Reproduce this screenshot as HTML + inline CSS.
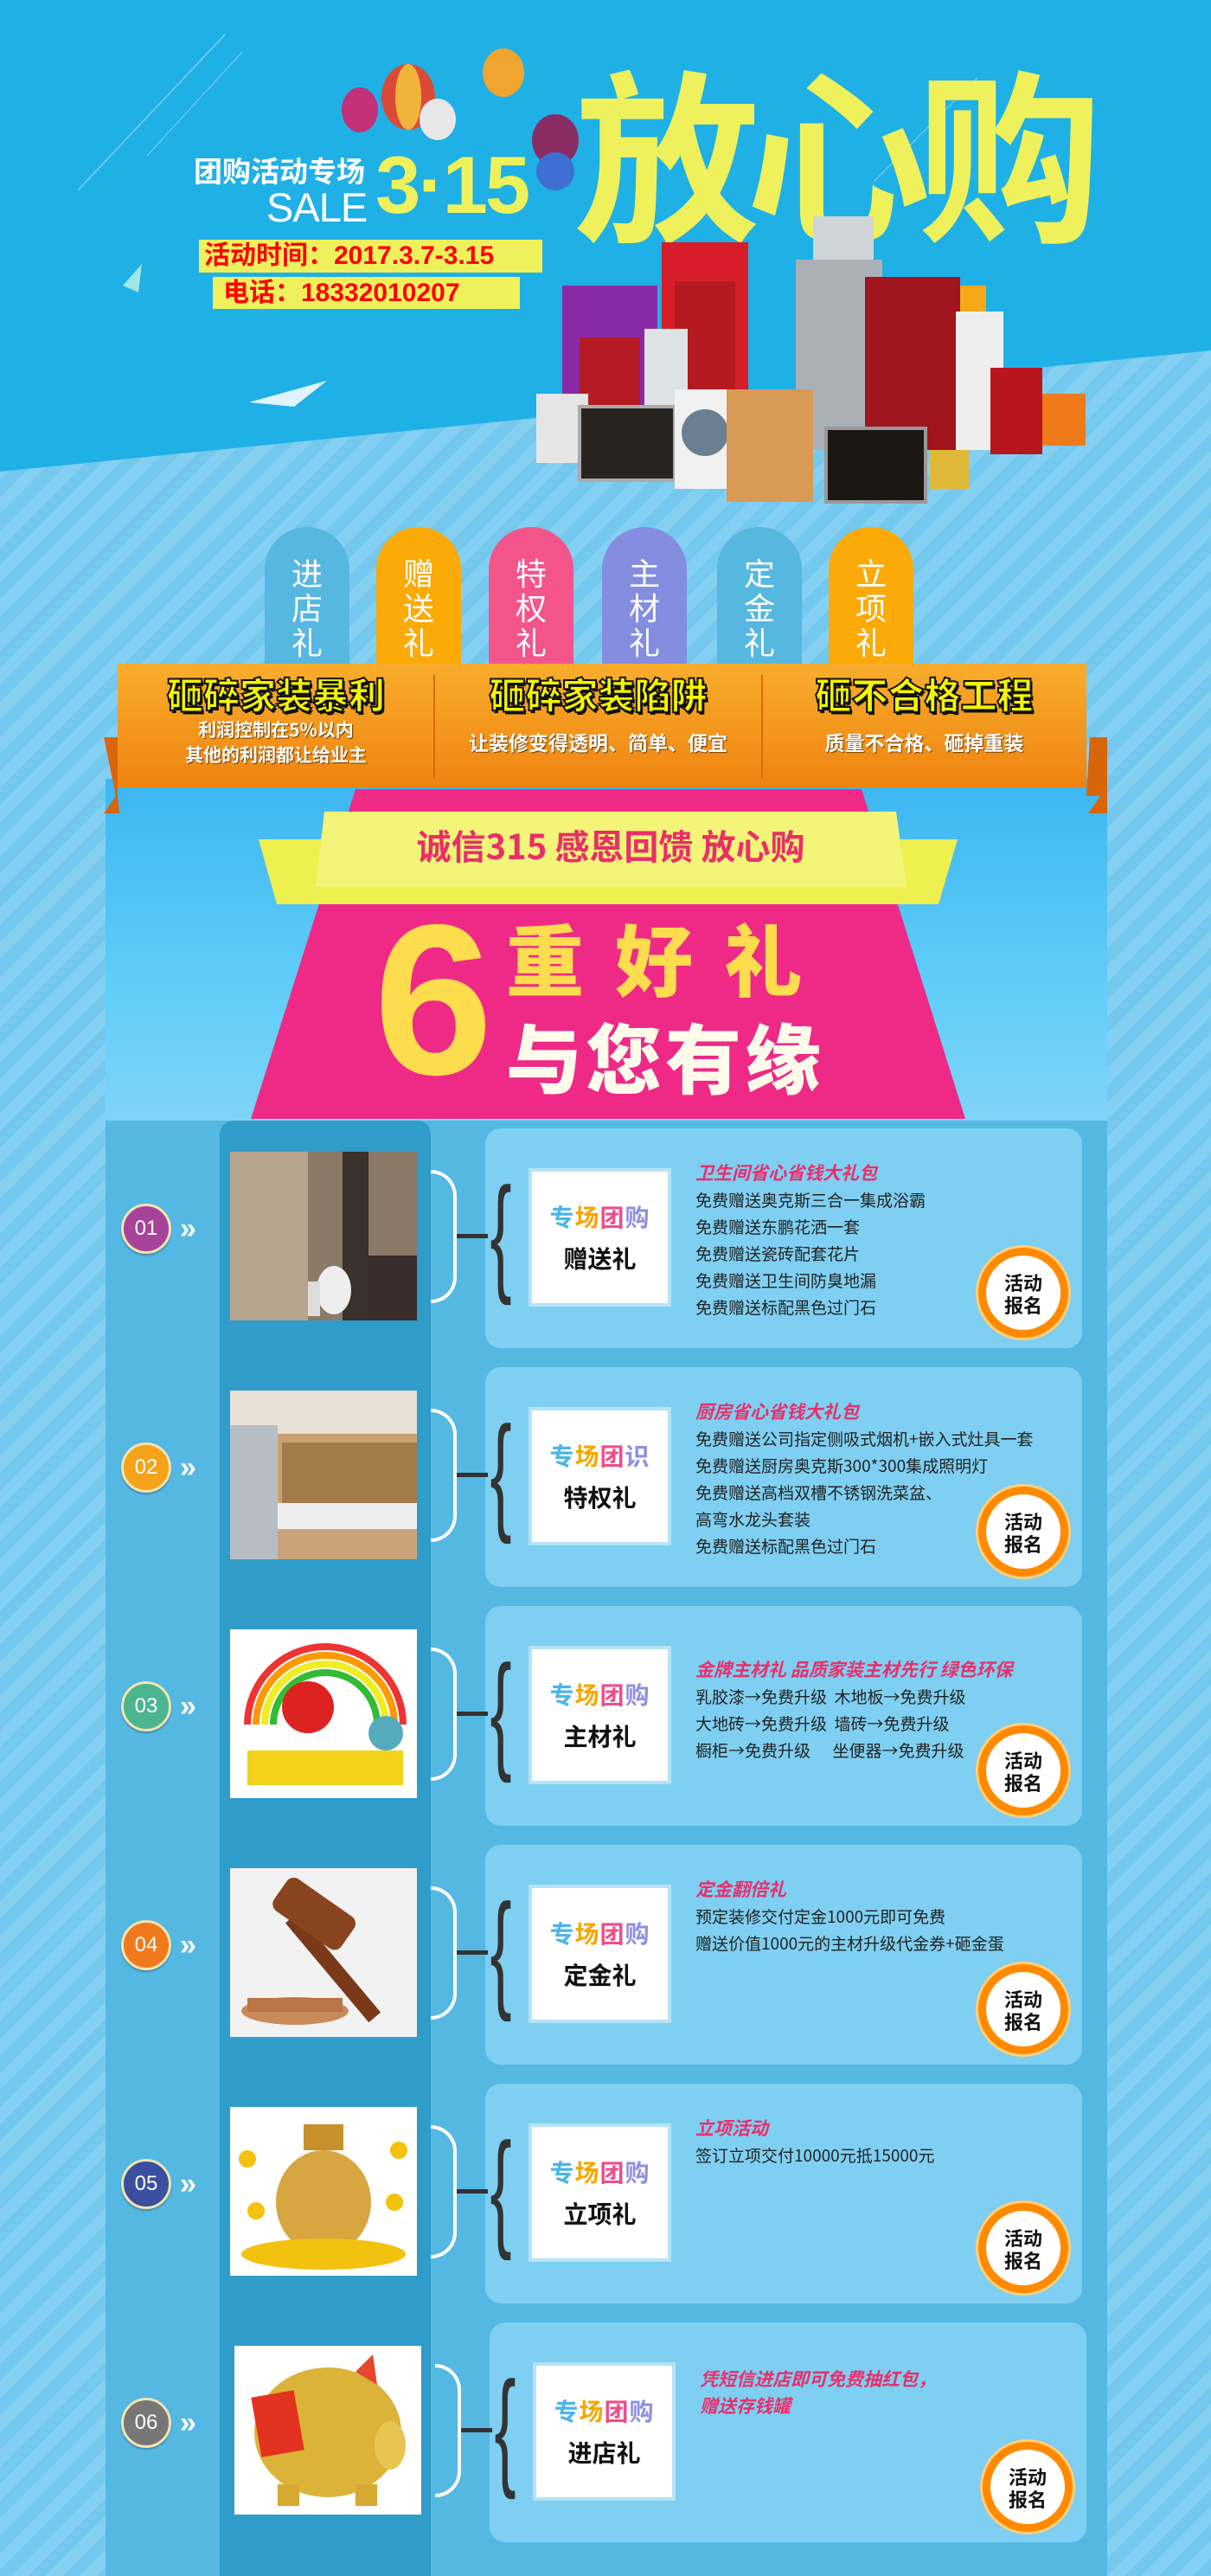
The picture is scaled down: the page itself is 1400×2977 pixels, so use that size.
<!DOCTYPE html>
<html><head><meta charset="utf-8">
<style>
*{margin:0;padding:0;box-sizing:border-box}
body{width:1400px;height:2977px;position:relative;overflow:hidden;font-family:"Liberation Sans","Noto Sans CJK SC",sans-serif;
background:repeating-linear-gradient(135deg,#74c8ee 0 14px,#84d0f2 14px 28px);}
.abs{position:absolute}
.hdr{left:0;top:0;width:1400px;height:545px;background:#1fb0e6;clip-path:polygon(0 0,1400px 0,1400px 405px,0 545px)}
.tab{top:609px;width:98px;height:170px;border-radius:49px 49px 0 0;color:#fff;font-size:36px;line-height:40px;text-align:center;padding-top:32px;font-family:"Noto Sans CJK SC",sans-serif}
.panel{left:122px;top:900px;width:1158px;height:2077px;background:#55b8e3}
.sky{left:122px;top:900px;width:1158px;height:395px;background:linear-gradient(180deg,#3db6f0,#5fcdf8 60%,#7fd4f7)}
.col{left:254px;top:1295px;width:244px;height:1682px;background:#309cca;border-radius:16px 16px 0 0}
.card{left:561px;width:690px;height:254px;background:#7ecff1;border-radius:18px}
.img{left:266px;width:216px;height:195px}
.num{left:140px;width:58px;height:58px;border-radius:50%;border:3px solid #f1e4b0;color:#fff;font-size:24px;line-height:52px;text-align:center;box-shadow:0 2px 2px rgba(0,0,0,.25)}
.chev{left:208px;color:#fff;font-size:34px;font-weight:bold;line-height:34px}
.box{left:611px;width:165px;height:160px;background:#fff;border:4px solid #b5e3f7;text-align:center;font-family:"Noto Sans CJK SC",sans-serif;font-weight:bold}
.box .t{font-size:28px;margin-top:32px;letter-spacing:1px}
.box .s{font-size:28px;color:#111;margin-top:8px}
.txt{left:804px;font-family:"Noto Sans CJK SC",sans-serif;font-size:19px;line-height:31px;color:#222}
.txt .h{color:#e8306c;font-style:italic;font-weight:bold;font-size:21px}
.btn{width:104px;height:104px;border-radius:50%;background:#fff;border:9px solid #ff8a00;box-shadow:inset 0 0 0 4px #fff,0 0 0 3px #ffd07a;font-family:"Noto Sans CJK SC",sans-serif;font-weight:bold;font-size:22px;line-height:26px;text-align:center;padding-top:18px;color:#111}
.brace{font-family:"Liberation Sans",sans-serif}
.bh{font-size:42px;font-weight:900;color:#f3f600;-webkit-text-stroke:2px #111;line-height:54px;text-shadow:2px 3px 0 #111}
</style></head><body>
<div class="abs hdr"></div>
<svg class="abs" style="left:0;top:0" width="1400" height="560">
<line x1="90" y1="220" x2="260" y2="40" stroke="#7fd0f3" stroke-width="1.5"/>
<line x1="170" y1="180" x2="280" y2="60" stroke="#7fd0f3" stroke-width="1"/>
<line x1="1010" y1="210" x2="1130" y2="90" stroke="#7fd0f3" stroke-width="1"/>
<polygon points="288,465 378,440 330,455" fill="#fff"/>
<polygon points="288,465 378,440 340,470" fill="#dff4fc"/>
<polygon points="142,330 164,305 160,338" fill="#9fe7e4"/>
<ellipse cx="416" cy="127" rx="21" ry="26" fill="#c2307a"/><ellipse cx="472" cy="112" rx="31" ry="38" fill="#d94b36"/><ellipse cx="472" cy="112" rx="15" ry="38" fill="#f2b33a"/>
<ellipse cx="506" cy="138" rx="21" ry="24" fill="#e8e8e8"/><ellipse cx="582" cy="84" rx="24" ry="28" fill="#f0a531"/><ellipse cx="642" cy="162" rx="27" ry="30" fill="#8a2c64"/><ellipse cx="642" cy="198" rx="22" ry="22" fill="#3f6fd2"/>
</svg>
<div class="abs" style="left:224px;top:176px;font-size:33px;font-weight:bold;color:#fff;font-family:'Noto Sans CJK SC',sans-serif;line-height:40px">团购活动专场</div>
<div class="abs" style="left:308px;top:216px;font-size:47px;color:#fff;line-height:48px;letter-spacing:-1px">SALE</div>
<div class="abs" style="left:434px;top:164px;font-size:94px;font-weight:bold;color:#eef15c;line-height:100px;letter-spacing:-3px">3·15</div>
<div class="abs" style="left:664px;top:40px;font-size:214px;font-weight:bold;color:#eef15c;line-height:260px;font-family:'Noto Sans CJK SC',sans-serif;letter-spacing:-16px">放心购</div>
<div class="abs" style="left:230px;top:277px;width:397px;height:38px;background:#eef15c;color:#f00;font-weight:bold;font-size:30px;line-height:38px;padding-left:6px;white-space:nowrap">活动时间：2017.3.7-3.15</div>
<div class="abs" style="left:246px;top:320px;width:355px;height:37px;background:#eef15c;color:#f00;font-weight:bold;font-size:30px;line-height:37px;padding-left:12px;white-space:nowrap">电话：18332010207</div>
<svg class="abs" style="left:600px;top:210px" width="680" height="380">
<rect x="50" y="120" width="110" height="200" fill="#8a2aa6"/>
<rect x="165" y="70" width="100" height="170" fill="#d81d2a"/>
<rect x="430" y="120" width="110" height="150" fill="#f5a818"/>
<rect x="340" y="40" width="70" height="110" fill="#cfd4d8"/>
<rect x="320" y="90" width="100" height="220" fill="#a9b0b6"/>
<rect x="180" y="115" width="70" height="200" fill="#b51a22"/>
<rect x="400" y="110" width="110" height="200" fill="#a0151e"/>
<rect x="505" y="150" width="55" height="160" fill="#eee"/>
<rect x="545" y="215" width="60" height="100" fill="#b8161f"/>
<rect x="70" y="180" width="70" height="150" fill="#b41b25"/>
<rect x="145" y="170" width="50" height="140" fill="#dfe3e6"/>
<rect x="20" y="245" width="60" height="80" fill="#e5e5e5"/>
<rect x="70" y="260" width="110" height="85" fill="#2a2420" stroke="#aaa" stroke-width="4"/>
<rect x="180" y="240" width="80" height="115" fill="#f1f1f1"/><circle cx="215" cy="290" r="27" fill="#6a7f92"/>
<rect x="240" y="240" width="100" height="130" fill="#d99a55"/>
<rect x="355" y="285" width="115" height="85" fill="#1c1714" stroke="#999" stroke-width="4"/>
<rect x="475" y="310" width="45" height="45" fill="#e0b838"/>
<rect x="605" y="245" width="50" height="60" fill="#ef7a1a"/>
</svg>
<div class="abs tab" style="left:306px;background:#56b7e1">进<br>店<br>礼</div>
<div class="abs tab" style="left:435px;background:#fbaa08">赠<br>送<br>礼</div>
<div class="abs tab" style="left:565px;background:#f3558a">特<br>权<br>礼</div>
<div class="abs tab" style="left:696px;background:#848de0">主<br>材<br>礼</div>
<div class="abs tab" style="left:829px;background:#56b7e1">定<br>金<br>礼</div>
<div class="abs tab" style="left:958px;background:#fbaa08">立<br>项<br>礼</div>
<div class="abs panel"></div>
<div class="abs sky"></div>
<svg class="abs" style="left:0;top:900px" width="1400" height="400">
<polygon points="411,12 996,12 1116,393 290,393" fill="#ee2a86"/>
<polygon points="299,70 1107,70 1085,145 320,145" fill="#eef050"/>
<polygon points="375,38 1036,38 1048,125 365,125" fill="#f2f578"/>
</svg>
<div class="abs" style="left:396px;top:948px;width:620px;text-align:center;color:#e83068;font-weight:bold;font-size:40px;line-height:56px;font-family:'Noto Sans CJK SC',sans-serif">诚信315 感恩回馈 放心购</div>
<div class="abs" style="left:432px;top:1030px;font-size:248px;font-weight:bold;color:#fddc4e;line-height:250px;letter-spacing:-10px">6</div>
<div class="abs" style="left:585px;top:1045px;font-size:90px;font-weight:900;color:#fddc4e;line-height:120px;letter-spacing:36px;font-family:'Noto Sans CJK SC',sans-serif">重好礼</div>
<div class="abs" style="left:585px;top:1160px;font-size:88px;font-weight:900;color:#fffbea;line-height:120px;letter-spacing:4px;font-family:'Noto Sans CJK SC',sans-serif">与您有缘</div>
<svg class="abs" style="left:110px;top:760px" width="1180" height="190">
<defs><linearGradient id="g" x1="0" y1="0" x2="0" y2="1"><stop offset="0" stop-color="#f9ad2c"/><stop offset="1" stop-color="#ef8310"/></linearGradient></defs>
<polygon points="10,92 26,92 26,160 28,180 10,180 24,160" fill="#d9650a"/>
<polygon points="1150,92 1170,92 1170,180 1148,180 1162,160 1146,160" fill="#d9650a"/>
<rect x="26" y="7" width="1120" height="143" fill="url(#g)"/>
<line x1="392" y1="20" x2="392" y2="140" stroke="#d86a08" stroke-width="2"/>
<line x1="771" y1="20" x2="771" y2="140" stroke="#d86a08" stroke-width="2"/>
</svg>
<div class="abs" style="left:136px;top:775px;width:366px;text-align:center;font-family:'Noto Sans CJK SC',sans-serif">
<div class="bh">砸碎家装暴利</div>
<div style="font-size:21px;font-weight:bold;color:#fff;line-height:29px;text-shadow:1px 1px 1px #6a3a00">利润控制在5%以内<br>其他的利润都让给业主</div></div>
<div class="abs" style="left:502px;top:775px;width:379px;text-align:center;font-family:'Noto Sans CJK SC',sans-serif">
<div class="bh">砸碎家装陷阱</div>
<div style="font-size:23px;font-weight:bold;color:#fff;line-height:36px;margin-top:10px;text-shadow:1px 1px 1px #6a3a00">让装修变得透明、简单、便宜</div></div>
<div class="abs" style="left:881px;top:775px;width:375px;text-align:center;font-family:'Noto Sans CJK SC',sans-serif">
<div class="bh">砸不合格工程</div>
<div style="font-size:23px;font-weight:bold;color:#fff;line-height:36px;margin-top:10px;text-shadow:1px 1px 1px #6a3a00">质量不合格、砸掉重装</div></div>

<div class="abs col"></div>

<div class="abs card" style="top:1304px"></div>
<div class="abs num" style="top:1391px;background:#a7449a">01</div><div class="abs chev" style="top:1403px">»</div>
<svg class="abs img" style="top:1331px" viewBox="0 0 216 195"><rect width="216" height="195" fill="#8a7a68"/><rect x="0" y="0" width="90" height="195" fill="#b5a48e"/><rect x="130" y="0" width="30" height="195" fill="#3a302c"/><rect x="160" y="120" width="56" height="75" fill="#3a2c2a"/><ellipse cx="120" cy="160" rx="20" ry="28" fill="#eee"/><rect x="90" y="150" width="14" height="40" fill="#ddd"/></svg>
<div class="abs" style="left:498px;top:1352px;width:30px;height:154px;border:4px solid #fff;border-left:none;border-radius:0 30px 30px 0"></div>
<div class="abs" style="left:528px;top:1426px;width:36px;height:5px;background:#333"></div>
<div class="abs brace" style="left:554px;top:1340px;font-size:150px;line-height:170px;color:#333;font-weight:100;transform:scaleX(.5)">{</div>
<div class="abs box" style="top:1350px"><div class="t"><span style="color:#4ab6e8">专</span><span style="color:#f5a700">场</span><span style="color:#ef4d8a">团</span><span style="color:#8d8fe2">购</span></div><div class="s">赠送礼</div></div>
<div class="abs txt" style="top:1340px"><div class="h">卫生间省心省钱大礼包</div>免费赠送奥克斯三合一集成浴霸<br>免费赠送东鹏花洒一套<br>免费赠送瓷砖配套花片<br>免费赠送卫生间防臭地漏<br>免费赠送标配黑色过门石</div>
<div class="abs btn" style="left:1131px;top:1442px">活动<br>报名</div>

<div class="abs card" style="top:1580px"></div>
<div class="abs num" style="top:1667px;background:#f5a31a">02</div><div class="abs chev" style="top:1679px">»</div>
<svg class="abs img" style="top:1607px" viewBox="0 0 216 195"><rect width="216" height="195" fill="#c9a273"/><rect x="0" y="0" width="216" height="50" fill="#e8e0d4"/><rect x="0" y="40" width="55" height="155" fill="#b7bdc4"/><rect x="60" y="60" width="156" height="80" fill="#a37a4a"/><rect x="55" y="130" width="161" height="30" fill="#eee"/><rect x="55" y="160" width="161" height="35" fill="#caa37a"/></svg>
<div class="abs" style="left:498px;top:1628px;width:30px;height:154px;border:4px solid #fff;border-left:none;border-radius:0 30px 30px 0"></div>
<div class="abs" style="left:528px;top:1702px;width:36px;height:5px;background:#333"></div>
<div class="abs brace" style="left:554px;top:1616px;font-size:150px;line-height:170px;color:#333;font-weight:100;transform:scaleX(.5)">{</div>
<div class="abs box" style="top:1626px"><div class="t"><span style="color:#4ab6e8">专</span><span style="color:#f5a700">场</span><span style="color:#ef4d8a">团</span><span style="color:#8d8fe2">识</span></div><div class="s">特权礼</div></div>
<div class="abs txt" style="top:1616px"><div class="h">厨房省心省钱大礼包</div>免费赠送公司指定侧吸式烟机+嵌入式灶具一套<br>免费赠送厨房奥克斯300*300集成照明灯<br>免费赠送高档双槽不锈钢洗菜盆、<br>高弯水龙头套装<br>免费赠送标配黑色过门石</div>
<div class="abs btn" style="left:1131px;top:1718px">活动<br>报名</div>

<div class="abs card" style="top:1856px"></div>
<div class="abs num" style="top:1943px;background:#4bb58f">03</div><div class="abs chev" style="top:1955px">»</div>
<svg class="abs img" style="top:1883px" viewBox="0 0 216 195"><rect width="216" height="195" fill="#fff"/><path d="M20 110 A90 90 0 0 1 200 110" fill="none" stroke="#e33" stroke-width="8"/><path d="M30 110 A80 80 0 0 1 190 110" fill="none" stroke="#f90" stroke-width="8"/><path d="M40 110 A70 70 0 0 1 180 110" fill="none" stroke="#ee2" stroke-width="8"/><path d="M50 110 A60 60 0 0 1 170 110" fill="none" stroke="#3b3" stroke-width="8"/><circle cx="90" cy="90" r="30" fill="#d22"/><rect x="20" y="140" width="180" height="40" fill="#f3d21a"/><circle cx="180" cy="120" r="20" fill="#5ab"/></svg>
<div class="abs" style="left:498px;top:1904px;width:30px;height:154px;border:4px solid #fff;border-left:none;border-radius:0 30px 30px 0"></div>
<div class="abs" style="left:528px;top:1978px;width:36px;height:5px;background:#333"></div>
<div class="abs brace" style="left:554px;top:1892px;font-size:150px;line-height:170px;color:#333;font-weight:100;transform:scaleX(.5)">{</div>
<div class="abs box" style="top:1902px"><div class="t"><span style="color:#4ab6e8">专</span><span style="color:#f5a700">场</span><span style="color:#ef4d8a">团</span><span style="color:#8d8fe2">购</span></div><div class="s">主材礼</div></div>
<div class="abs txt" style="top:1914px;white-space:pre"><div class="h">金牌主材礼 品质家装主材先行 绿色环保</div>乳胶漆→免费升级  木地板→免费升级
大地砖→免费升级  墙砖→免费升级
橱柜→免费升级      坐便器→免费升级</div>
<div class="abs btn" style="left:1131px;top:1994px">活动<br>报名</div>

<div class="abs card" style="top:2132px"></div>
<div class="abs num" style="top:2219px;background:#ef7a1c">04</div><div class="abs chev" style="top:2231px">»</div>
<svg class="abs img" style="top:2159px" viewBox="0 0 216 195"><rect width="216" height="195" fill="#f2f2f2"/><ellipse cx="75" cy="165" rx="62" ry="16" fill="#c98a5a"/><rect x="20" y="150" width="110" height="16" fill="#b97447"/><rect x="110" y="40" width="18" height="150" fill="#7a3a1a" transform="rotate(-40 119 115)"/><rect x="50" y="30" width="95" height="45" rx="10" fill="#8a4420" transform="rotate(35 97 52)"/></svg>
<div class="abs" style="left:498px;top:2180px;width:30px;height:154px;border:4px solid #fff;border-left:none;border-radius:0 30px 30px 0"></div>
<div class="abs" style="left:528px;top:2254px;width:36px;height:5px;background:#333"></div>
<div class="abs brace" style="left:554px;top:2168px;font-size:150px;line-height:170px;color:#333;font-weight:100;transform:scaleX(.5)">{</div>
<div class="abs box" style="top:2178px"><div class="t"><span style="color:#4ab6e8">专</span><span style="color:#f5a700">场</span><span style="color:#ef4d8a">团</span><span style="color:#8d8fe2">购</span></div><div class="s">定金礼</div></div>
<div class="abs txt" style="top:2168px"><div class="h">定金翻倍礼</div>预定装修交付定金1000元即可免费<br>赠送价值1000元的主材升级代金券+砸金蛋</div>
<div class="abs btn" style="left:1131px;top:2270px">活动<br>报名</div>

<div class="abs card" style="top:2408px"></div>
<div class="abs num" style="top:2495px;background:#3b4fa0">05</div><div class="abs chev" style="top:2507px">»</div>
<svg class="abs img" style="top:2435px" viewBox="0 0 216 195"><rect width="216" height="195" fill="#fff"/><ellipse cx="108" cy="110" rx="55" ry="60" fill="#d8a640"/><rect x="85" y="20" width="46" height="30" fill="#c8902a"/><ellipse cx="108" cy="170" rx="95" ry="18" fill="#f2c20e"/><circle cx="20" cy="60" r="10" fill="#f2c20e"/><circle cx="195" cy="50" r="10" fill="#f2c20e"/><circle cx="30" cy="120" r="10" fill="#f2c20e"/><circle cx="190" cy="110" r="10" fill="#f2c20e"/></svg>
<div class="abs" style="left:498px;top:2456px;width:30px;height:154px;border:4px solid #fff;border-left:none;border-radius:0 30px 30px 0"></div>
<div class="abs" style="left:528px;top:2530px;width:36px;height:5px;background:#333"></div>
<div class="abs brace" style="left:554px;top:2444px;font-size:150px;line-height:170px;color:#333;font-weight:100;transform:scaleX(.5)">{</div>
<div class="abs box" style="top:2454px"><div class="t"><span style="color:#4ab6e8">专</span><span style="color:#f5a700">场</span><span style="color:#ef4d8a">团</span><span style="color:#8d8fe2">购</span></div><div class="s">立项礼</div></div>
<div class="abs txt" style="top:2444px"><div class="h">立项活动</div>签订立项交付10000元抵15000元</div>
<div class="abs btn" style="left:1131px;top:2546px">活动<br>报名</div>

<div class="abs card" style="top:2684px;left:566px"></div>
<div class="abs num" style="top:2771px;background:#777">06</div><div class="abs chev" style="top:2783px">»</div>
<svg class="abs img" style="top:2711px;left:271px" viewBox="0 0 216 195"><rect width="216" height="195" fill="#fff"/><ellipse cx="108" cy="100" rx="85" ry="75" fill="#dbb338"/><ellipse cx="180" cy="115" rx="18" ry="28" fill="#e8c550"/><rect x="25" y="55" width="50" height="70" fill="#e3321f" transform="rotate(-10 50 90)"/><polygon points="140,30 160,10 165,45" fill="#e8462a"/><rect x="50" y="160" width="25" height="25" fill="#d7a830"/><rect x="140" y="160" width="25" height="25" fill="#d7a830"/></svg>
<div class="abs" style="left:503px;top:2732px;width:30px;height:154px;border:4px solid #fff;border-left:none;border-radius:0 30px 30px 0"></div>
<div class="abs" style="left:533px;top:2806px;width:36px;height:5px;background:#333"></div>
<div class="abs brace" style="left:559px;top:2720px;font-size:150px;line-height:170px;color:#333;font-weight:100;transform:scaleX(.5)">{</div>
<div class="abs box" style="top:2730px;left:616px"><div class="t"><span style="color:#4ab6e8">专</span><span style="color:#f5a700">场</span><span style="color:#ef4d8a">团</span><span style="color:#8d8fe2">购</span></div><div class="s">进店礼</div></div>
<div class="abs txt" style="top:2734px;left:809px"><div class="h">凭短信进店即可免费抽红包，<br>赠送存钱罐</div></div>
<div class="abs btn" style="left:1136px;top:2822px">活动<br>报名</div>
</body></html>
